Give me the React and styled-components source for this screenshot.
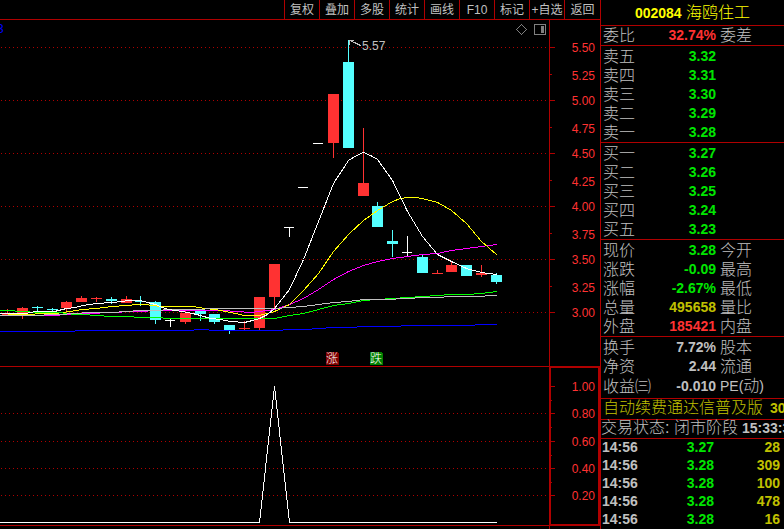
import React from "react";
import styled, { createGlobalStyle } from "styled-components";

const SANS = `"Liberation Sans", "Noto Sans CJK SC", sans-serif`;

const tools = ["复权", "叠加", "多股", "统计", "画线", "F10", "标记", "+自选", "返回"];

const sells = [
  { label: "卖五", value: "3.32", color: "#00e600" },
  { label: "卖四", value: "3.31", color: "#00e600" },
  { label: "卖三", value: "3.30", color: "#00e600" },
  { label: "卖二", value: "3.29", color: "#00e600" },
  { label: "卖一", value: "3.28", color: "#00e600" },
];

const buys = [
  { label: "买一", value: "3.27", color: "#00e600" },
  { label: "买二", value: "3.26", color: "#00e600" },
  { label: "买三", value: "3.25", color: "#00e600" },
  { label: "买四", value: "3.24", color: "#00e600" },
  { label: "买五", value: "3.23", color: "#00e600" },
];

const prices = [
  { label: "现价", value: "3.28", color: "#00e600", next: "今开" },
  { label: "涨跌", value: "-0.09", color: "#00e600", next: "最高" },
  { label: "涨幅", value: "-2.67%", color: "#00e600", next: "最低" },
  { label: "总量", value: "495658", color: "#c0c000", next: "量比" },
  { label: "外盘", value: "185421", color: "#ff3232", next: "内盘" },
];

const basics = [
  { label: "换手", value: "7.72%", color: "#c0c0c0", next: "股本" },
  { label: "净资", value: "2.44", color: "#c0c0c0", next: "流通" },
  {
    label: "收益㈢",
    value: "-0.010",
    color: "#c0c0c0",
    next: (
      <>
        <small>PE(</small>动<small>)</small>
      </>
    ),
  },
];

const deals = [
  ["14:56", "3.27", "28"],
  ["14:56", "3.28", "309"],
  ["14:56", "3.28", "100"],
  ["14:56", "3.28", "478"],
  ["14:56", "3.28", "16"],
];

const RED = "#ff3232";
const CYAN = "#54ffff";
const WHITE = "#ffffff";

// x, color, high, body top, body bottom, low
const candles = [
  [7, RED, 309, 313, 315, 315],
  [22, RED, 307, 308, 315, 319],
  [37, CYAN, 306, 307, 308, 311],
  [52, CYAN, 308, 309, 310, 311],
  [66, RED, 301, 302, 308, 313],
  [81, RED, 296, 298, 302, 302],
  [96, RED, 297, 298, 299, 302],
  [111, CYAN, 297, 299, 301, 304],
  [126, RED, 296, 299, 303, 303],
  [140, CYAN, 296, 301, 302, 306],
  [155, CYAN, 301, 302, 320, 324],
  [170, WHITE, 319, 320, 321, 327],
  [185, RED, 311, 313, 322, 324],
  [200, CYAN, 311, 311, 314, 321],
  [214, CYAN, 314, 314, 322, 324],
  [229, CYAN, 325, 325, 330, 334],
  [244, RED, 321, 328, 329, 330],
  [259, RED, 297, 297, 328, 330],
  [274, RED, 264, 264, 297, 308],
  [289, WHITE, 227, 227, 228, 237],
  [303, WHITE, 187, 187, 188, 188],
  [318, WHITE, 143, 143, 144, 144],
  [333, RED, 94, 94, 143, 158],
  [348, CYAN, 40, 62, 148, 148],
  [363, RED, 128, 183, 196, 196],
  [377, CYAN, 202, 206, 227, 227],
  [392, CYAN, 230, 241, 244, 257],
  [407, WHITE, 236, 252, 253, 256],
  [422, CYAN, 255, 257, 273, 273],
  [437, RED, 270, 273, 274, 274],
  [451, RED, 262, 265, 272, 272],
  [466, CYAN, 265, 265, 276, 276],
  [481, RED, 265, 273, 275, 277],
  [496, CYAN, 273, 275, 282, 284],
];

const averages = [
  {
    color: "#0000ff",
    points:
      "0,331 74,331 75,330 193,330 194,329 208,329 209,330 282,330 283,329 311,329 312,328 325,328 326,327 356,327 357,326 400,326 401,325 474,325 475,324 496,324",
  },
  {
    color: "#ff00ff",
    points:
      "0,315 59,315 60,314 89,313 133,311 163,310 222,310 236,311 250,312 259,311 267,310 274,309 289,304 303,298 318,289 333,279 348,271 363,265 377,261 392,258 407,256 422,254 437,253 451,250 466,248 481,246 496,244",
  },
  {
    color: "#ffff00",
    points:
      "0,313 15,314 55,313 62,312 70,311 81,309 96,308 111,306 126,305 137,304 147,304 150,305 163,306 193,306 204,308 215,309 225,311 235,313 244,315 259,315 274,311 289,304 303,290 318,273 333,251 348,234 363,220 377,210 392,201 400,198 407,197 415,197 422,198 437,202 451,210 466,223 481,241 496,254",
  },
  {
    color: "#00ff00",
    points:
      "0,310 14,310 15,311 29,311 30,312 59,312 74,314 89,314 90,315 103,315 104,316 133,316 134,317 162,317 163,318 259,318 274,318 289,315 303,313 318,309 333,305 348,303 363,300 377,299 392,298 407,297 422,296 437,295 451,294 466,294 481,293 496,291",
  },
  {
    color: "#c0c0c0",
    points:
      "0,315 29,315 59,314 74,313 89,312 118,312 119,311 132,311 133,310 162,310 163,309 204,309 205,308 274,308 289,307 303,306 318,304 333,302 348,301 363,299 385,299 407,298 422,297 437,297 451,296 474,296 496,295",
  },
  {
    color: "#ffffff",
    points:
      "0,313 25,313 35,311 54,311 66,308 75,307 82,305 96,303 111,302 123,301 126,300 140,300 147,302 155,304 162,307 168,309 182,311 192,313 200,315 210,318 220,319 230,321 244,322 252,320 259,318 267,314 274,308 289,289 303,259 318,221 333,183 348,160 356,155 363,152 370,155 377,159 392,180 407,211 422,236 437,254 451,261 466,268 481,272 496,274",
  },
];

const priceMajor = [47, 100, 153, 206, 259, 312];
const priceMinor = [74, 127, 180, 233, 286];
const priceLabels = [
  ["5.50", 52],
  ["5.25", 80],
  ["5.00", 105],
  ["4.75", 133],
  ["4.50", 158],
  ["4.25", 186],
  ["4.00", 211],
  ["3.75", 239],
  ["3.50", 264],
  ["3.25", 292],
  ["3.00", 317],
];

const signalGrid = [413, 441, 468, 495];
const signalMinor = [400, 427, 455, 482];
const signalLabels = [
  ["1.00", 391],
  ["0.80", 418],
  ["0.60", 446],
  ["0.40", 473],
  ["0.20", 500],
];

const Grid = ({ lines }) =>
  lines.map((y) => (
    <GridLine key={y} d={`M1 ${y + 0.5}H548`} />
  ));

const Ticks = ({ lines, size }) =>
  lines.map((y) => (
    <rect key={y} x="550" y={y} width={size} height="1" fill="#b00000" />
  ));

const Labels = ({ items }) =>
  items.map(([text, y]) => (
    <AxisText key={text} x="595" y={y}>
      {text}
    </AxisText>
  ));

const Candle = ({ data }) => {
  const [x, color, high, top, bottom, low] = data;

  return (
    <g fill={color}>
      <rect x={x} y={high} width="1" height={low - high} />
      <rect x={x - 5} y={top} width={color === WHITE ? 10 : 11} height={bottom - top} />
    </g>
  );
};

const PriceChart = () => (
  <Chart viewBox="0 20 600 346">
    <Grid lines={priceMajor} />
    <rect x="549" y="20" width="1" height="346" fill="#b00000" />
    <Ticks lines={priceMajor} size="5" />
    <Ticks lines={priceMinor} size="2" />
    <Labels items={priceLabels} />
    {candles.map((item) => (
      <Candle key={item[0]} data={item} />
    ))}
    <g transform="translate(0.5 0.5)">
      {averages.map((line) => (
        <Line key={line.color} stroke={line.color} points={line.points} />
      ))}
      <Line stroke="#c0c0c0" points="349,44 349,40 353,40" />
      <Line stroke="#c0c0c0" points="349,40 354,42 360,45" />
    </g>
    <ChartText x="362" y="50" fill="#c0c0c0">
      5.57
    </ChartText>
    <ChartText x="-3" y="33" fill="#0000ff">
      3
    </ChartText>
    <path d="M326 352h11l2 2v11h-13z" fill="#800000" />
    <ChartText x="326" y="363" fill="#ffffff">
      涨
    </ChartText>
    <path d="M370 352h11l2 2v11h-13z" fill="#008000" />
    <ChartText x="370" y="363" fill="#ffffff">
      跌
    </ChartText>
    <path d="M521.5 24.5l5 5-5 5-5-5z" fill="none" stroke="#808080" />
    <rect x="534.5" y="24.5" width="11" height="10" rx="1" fill="none" stroke="#808080" />
    <rect x="541" y="26" width="3" height="7" fill="#808080" />
  </Chart>
);

const SignalChart = () => (
  <Chart viewBox="0 366 600 163">
    <Grid lines={signalGrid} />
    <rect x="0" y="366" width="549" height="1" fill="#b00000" />
    <rect x="0" y="525" width="549" height="1" fill="#b00000" />
    <rect x="549" y="525" width="1" height="4" fill="#b00000" />
    <rect x="550" y="367" width="49" height="158" fill="none" stroke="#b00000" strokeWidth="2" />
    <Ticks lines={[386, ...signalGrid]} size="5" />
    <Ticks lines={signalMinor} size="2" />
    <Labels items={signalLabels} />
    <g transform="translate(0.5 0.5)">
      <Line stroke="#ffffff" points="0,522 259,522 274,386 289,522 496,522" />
    </g>
  </Chart>
);

const QuoteTable = ({ rows }) => (
  <Table>
    <tbody>
      {rows.map((row) => (
        <tr key={row.label}>
          <Label scope="row">{row.label}</Label>
          <Value color={row.color}>{row.value}</Value>
          <Next>{row.next}</Next>
        </tr>
      ))}
    </tbody>
  </Table>
);

const App = () => {
  return (
    <>
      <GlobalStyle />
      <Container>
        <Main>
          <Toolbar>
            {tools.map((name) => (
              <Tool key={name} type="button">
                {name}
              </Tool>
            ))}
          </Toolbar>
          <PriceChart />
          <SignalChart />
        </Main>
        <Side>
          <Title>
            <b>002084</b> 海鸥住工
          </Title>
          <Group>
            <QuoteTable
              rows={[{ label: "委比", value: "32.74%", color: RED, next: "委差" }]}
            />
          </Group>
          <Group $top={1}>
            <QuoteTable rows={sells} />
          </Group>
          <Group $top={1}>
            <QuoteTable rows={buys} />
          </Group>
          <Group $top={1}>
            <QuoteTable rows={prices} />
          </Group>
          <Group $top={1} $bottom={2}>
            <QuoteTable rows={basics} />
          </Group>
          <Notice>
            自动续费通达信普及版<b>30</b>
          </Notice>
          <Status>
            交易状态: 闭市阶段<b>15:33:30</b>
          </Status>
          <Table>
            <tbody>
              {deals.map(([time, price, volume], index) => (
                <Deal key={index}>
                  <Time>{time}</Time>
                  <Price>{price}</Price>
                  <Volume>{volume}</Volume>
                </Deal>
              ))}
            </tbody>
          </Table>
        </Side>
      </Container>
    </>
  );
};

export default App;

const GlobalStyle = createGlobalStyle`
  * {
    box-sizing: border-box;
  }

  body {
    margin: 0;
    background-color: #000000;
    color: #c0c0c0;
    font-family: ${SANS};
    font-weight: 300;
  }
`;

const Container = styled.div`
  display: grid;
  grid-template-columns: minmax(0, 1fr) 184px;
  overflow: hidden;
`;

const Main = styled.main`
  min-width: 0;
`;

const Toolbar = styled.div`
  height: 20px;
  display: flex;
  justify-content: flex-end;
  border-bottom: 1px solid #b00000;
`;

const Tool = styled.button`
  width: 35px;
  padding: 0;
  border: 0;
  border-left: 1px solid #b00000;
  background: none;
  color: #c0c0c0;
  font-family: ${SANS};
  font-size: 12px;
  line-height: 18px;
  white-space: nowrap;
  cursor: pointer;

  &:last-child {
    width: 36px;
  }
`;

const Chart = styled.svg`
  display: block;
  width: 100%;
  height: auto;
  font-family: ${SANS};
  font-size: 12px;
  shape-rendering: crispEdges;
`;

const GridLine = styled.path`
  fill: none;
  stroke: #b00000;
  stroke-dasharray: 1 3;
`;

const Line = styled.polyline`
  fill: none;
  stroke-width: 1;
  stroke-linecap: square;
`;

const ChartText = styled.text`
  font-size: 12px;
`;

const AxisText = styled.text`
  fill: #ff3232;
  text-anchor: end;
`;

const Side = styled.aside`
  min-width: 0;
  overflow: hidden;
  border-left: 1px solid #b00000;
  font-size: 16px;
  white-space: nowrap;

  b {
    font-size: 14px;
    font-weight: bold;
  }
`;

const Title = styled.div`
  height: 26px;
  line-height: 25px;
  border-bottom: 1px solid #b00000;
  color: #ffff00;
  text-align: center;
`;

const Group = styled.section`
  padding-top: ${(props) => props.$top || 0}px;
  padding-bottom: ${(props) => props.$bottom || 0}px;
  border-bottom: 1px solid #b00000;
`;

const Table = styled.table`
  width: 100%;
  table-layout: fixed;
  border-collapse: collapse;
  line-height: 19px;

  th,
  td {
    height: 19px;
    padding: 0;
  }
`;

const Label = styled.th`
  && {
    width: 53px;
    padding-left: 2px;
  }
  font-weight: 300;
  text-align: left;
`;

const Value = styled.td`
  width: 62px;
  color: ${(props) => props.color};
  font-size: 14px;
  font-weight: bold;
  text-align: right;
`;

const Next = styled.td`
  && {
    padding-left: 4px;
  }

  small {
    font-size: 14px;
  }
`;

const Notice = styled.div`
  height: 21px;
  padding-left: 2px;
  border-bottom: 1px solid #b00000;
  color: #c0c000;
  line-height: 18px;

  b {
    margin-left: 7px;
  }
`;

const Status = styled.div`
  height: 19px;
  border-bottom: 1px solid #b00000;
  line-height: 16px;

  b {
    margin-left: 4px;
  }
`;

const Deal = styled.tr`
  font-size: 14px;
  font-weight: bold;
  line-height: 16px;

  && td {
    height: 18px;
    vertical-align: top;
  }
`;

const Time = styled.td`
  && {
    width: 50px;
    padding-left: 1px;
  }
`;

const Price = styled.td`
  width: 63px;
  color: #00e600;
  text-align: right;
`;

const Volume = styled.td`
  && {
    padding-right: 4px;
  }
  color: #c0c000;
  text-align: right;
`;
